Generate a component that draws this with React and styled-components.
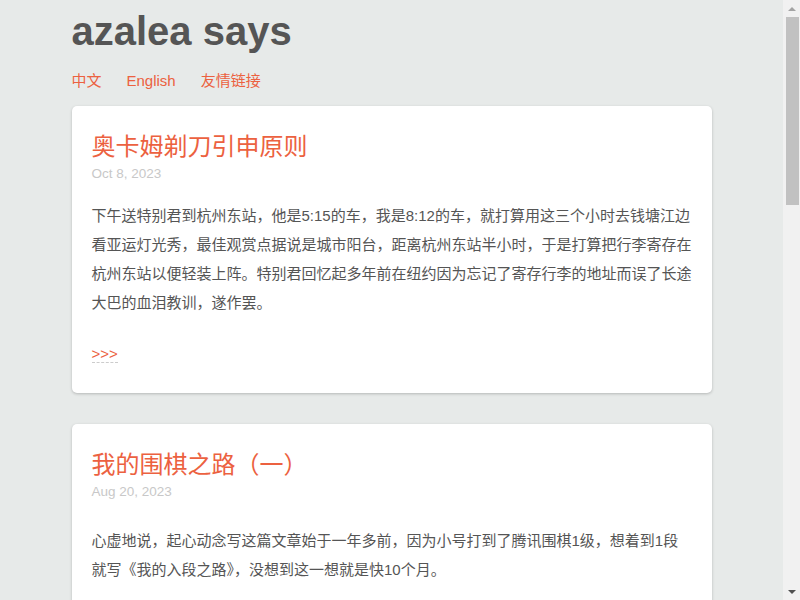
import React from "react";
import styled, { createGlobalStyle } from "styled-components";

const GlobalStyle = createGlobalStyle`
  html, body {
    margin: 0;
    padding: 0;
    background: #e7eae9;
  }
  body {
    font-family: "Liberation Sans", Arial, "Noto Sans CJK SC", sans-serif;
    font-size: 15px;
    color: #555;
  }
`;

const posts = [
  {
    title: "奥卡姆剃刀引申原则",
    date: "Oct 8, 2023",
    excerptTop: 17,
    excerpt:
      "下午送特别君到杭州东站，他是5:15的车，我是8:12的车，就打算用这三个小时去钱塘江边看亚运灯光秀，最佳观赏点据说是城市阳台，距离杭州东站半小时，于是打算把行李寄存在杭州东站以便轻装上阵。特别君回忆起多年前在纽约因为忘记了寄存行李的地址而误了长途大巴的血泪教训，遂作罢。",
  },
  {
    title: "我的围棋之路（一）",
    date: "Aug 20, 2023",
    excerptTop: 24,
    excerpt:
      "心虚地说，起心动念写这篇文章始于一年多前，因为小号打到了腾讯围棋1级，想着到1段就写《我的入段之路》，没想到这一想就是快10个月。",
  },
];

function App() {
  return (
    <>
      <GlobalStyle />
      <Viewport>
        <Page>
          <Header>
            <SiteTitle>azalea says</SiteTitle>
            <Nav>
              <NavLink href="#">中文</NavLink>
              <NavLink href="#">English</NavLink>
              <NavLink href="#">友情链接</NavLink>
            </Nav>
          </Header>
          <Posts>
            {posts.map((post) => (
              <Card key={post.title}>
                <PostTitle>{post.title}</PostTitle>
                <PostDate>{post.date}</PostDate>
                <Excerpt $top={post.excerptTop}>{post.excerpt}</Excerpt>
                <More href="#">&gt;&gt;&gt;</More>
              </Card>
            ))}
          </Posts>
        </Page>
      </Viewport>
      <Scrollbar>
        <Arrow $up />
        <Thumb />
        <Arrow />
      </Scrollbar>
    </>
  );
}

export default App;

const Viewport = styled.div`
  width: calc(100% - 17px);
`;

const Page = styled.div`
  max-width: 640px;
  margin: 0 auto;
  padding: 8px 0 40px;
  min-height: 1760px;
`;

const Header = styled.header`
  display: flex;
  flex-direction: column;
`;

const SiteTitle = styled.h1`
  margin: 0;
  font-size: 40px;
  font-weight: bold;
  line-height: 46px;
  color: #555;
`;

const Nav = styled.nav`
  display: flex;
  gap: 25px;
  margin-top: 18px;
  line-height: 17px;
`;

const NavLink = styled.a`
  color: #ec6140;
  text-decoration: none;
  font-size: 15px;
`;

const Posts = styled.main`
  display: flex;
  flex-direction: column;
  gap: 31px;
  margin-top: 17px;
`;

const Card = styled.article`
  background: #fff;
  border-radius: 5px;
  box-shadow: 0 1px 3px rgba(0, 0, 0, 0.22);
  padding: 25px 20px 25px;
  display: flex;
  flex-direction: column;
  align-items: flex-start;
`;

const PostTitle = styled.h2`
  margin: 0;
  font-family: "Liberation Sans", "Noto Sans CJK SC", sans-serif;
  font-weight: normal;
  font-size: 24px;
  line-height: 31px;
  color: #ec6140;
`;

const PostDate = styled.div`
  margin-top: 2px;
  font-size: 13.5px;
  line-height: 20px;
  color: #c8c8c8;
`;

const Excerpt = styled.p`
  margin: ${(p) => p.$top}px 0 22px;
  font-size: 15px;
  line-height: 29px;
  color: #555;
`;

const More = styled.a`
  font-size: 15px;
  line-height: 17px;
  color: #ec6140;
  text-decoration: none;
  border-bottom: 1px dashed #ccc;
  margin: 6px 0 5px;
`;

/* stand-in for the browser's classic scrollbar seen in the screenshot */
const Scrollbar = styled.div`
  position: fixed;
  top: 0;
  right: 0;
  width: 17px;
  height: 100vh;
  background: #f1f1f1;
  display: flex;
  flex-direction: column;
  align-items: center;
`;

const Arrow = styled.div`
  height: 17px;
  flex: none;
  display: flex;
  align-items: center;
  justify-content: center;

  &::before {
    content: "";
    border-left: 4px solid transparent;
    border-right: 4px solid transparent;
    ${(p) =>
      p.$up
        ? "border-bottom: 4px solid #a3a3a3;"
        : "border-top: 4px solid #505050;"}
  }
`;

const Thumb = styled.div`
  width: 13px;
  height: 188px;
  margin-left: 1px;
  background: #c1c1c1;
  margin-bottom: auto;
`;
